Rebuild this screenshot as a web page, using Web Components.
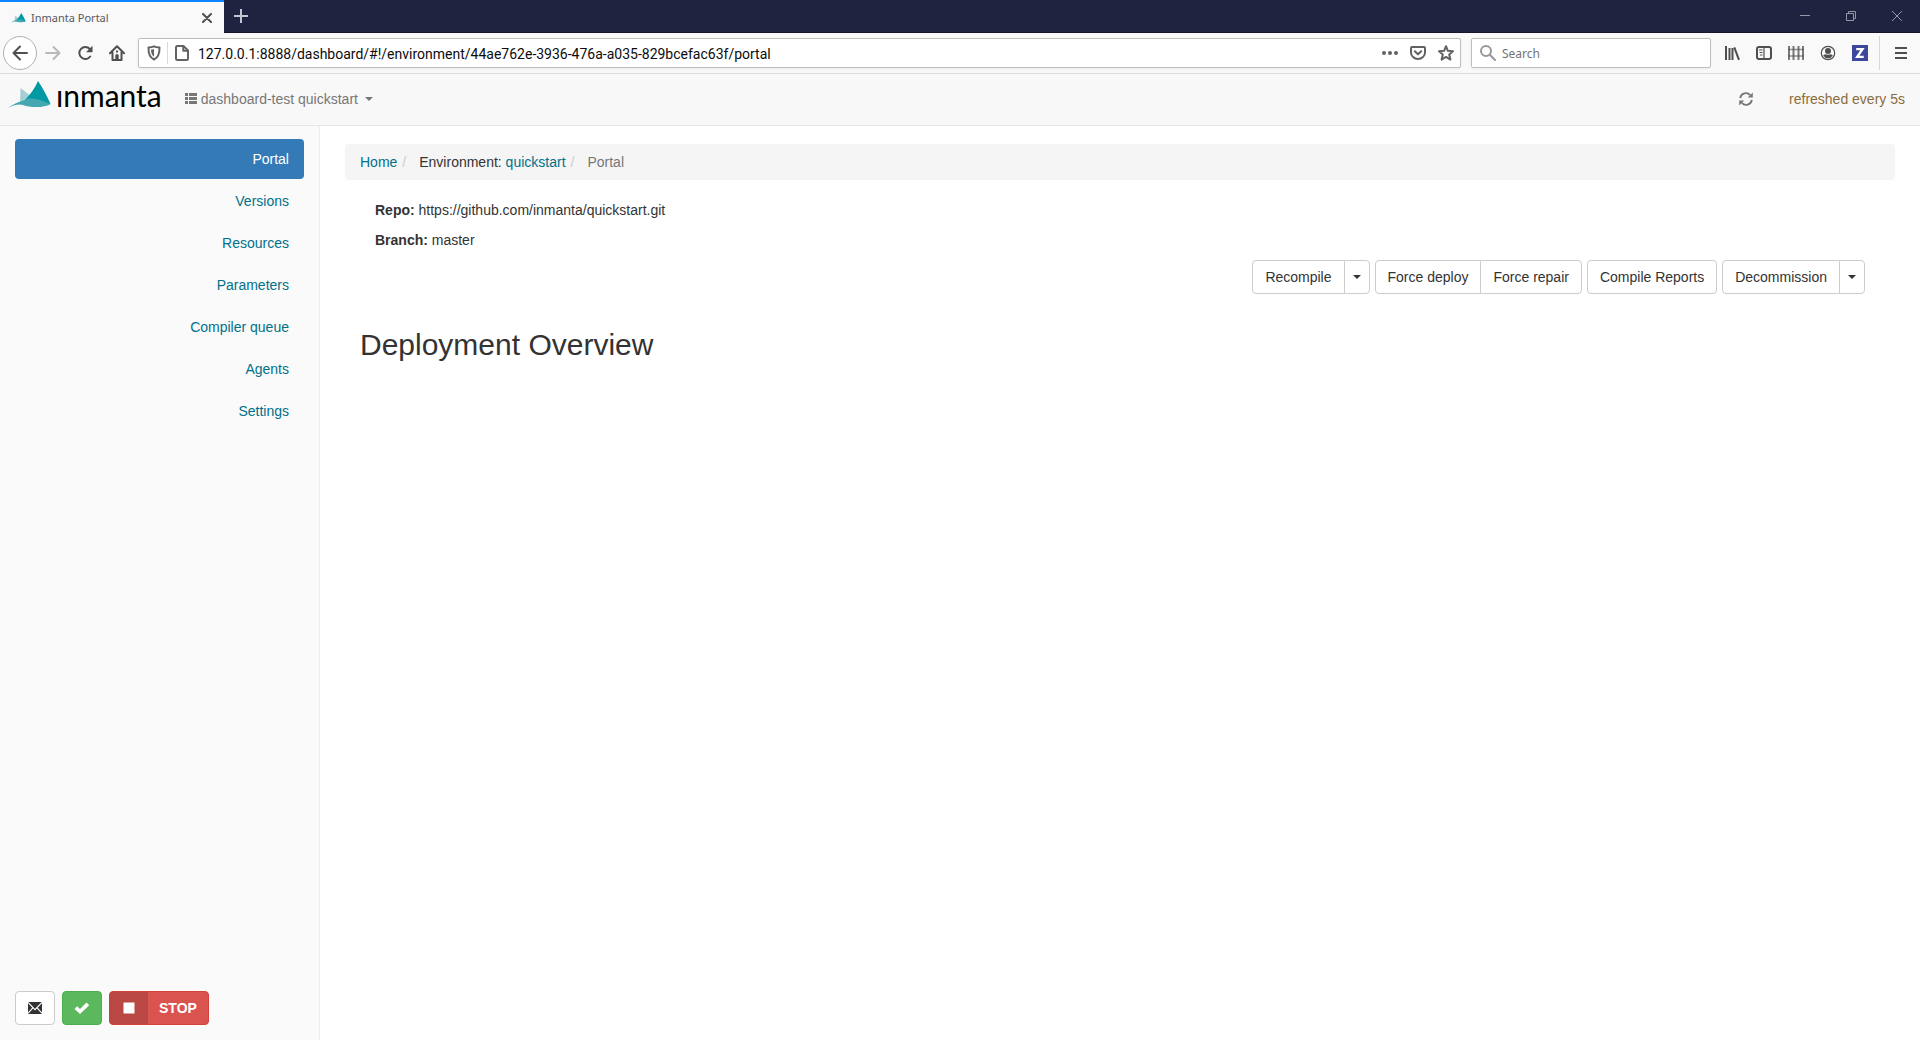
<!DOCTYPE html>
<html lang="en">
<head>
<meta charset="utf-8">
<title>Inmanta Portal</title>
<style>
html,body{margin:0;height:100%}
body{font:14px/20px "Liberation Sans",Arial,sans-serif;color:#333;background:#fff}
</style>
</head>
<body>
<inmanta-window></inmanta-window>
<script>
const define = (name, css, html) => customElements.define(name, class extends HTMLElement {
  constructor() {
    super();
    const t = document.createElement('template');
    t.innerHTML = `<style>*{box-sizing:border-box}button,input{font:inherit;color:inherit;margin:0}a{text-decoration:none}${css}</style>` +
      (typeof html === 'function' ? html(this) : html);
    this.attachShadow({ mode: 'open' }).append(t.content.cloneNode(true));
  }
});

/* Icons: [width, height, markup] */
const S = 'fill="none" stroke="currentColor" stroke-width="2" stroke-linecap="round" stroke-linejoin="round"';
const icons = {
  back: [16, 16, `<path ${S} d="M15 8H1.500M8 1.500L1.500 8L8 14.500"/>`],
  forward: [16, 16, `<path ${S} d="M1 8H14.500M8.500 2L14.500 8L8.500 14"/>`],
  reload: [16, 16, `<path ${S} d="M13.200 11.500A6 6 0 1 1 12.800 4"/><path fill="currentColor" d="M15.500.800V7.300H9z"/>`],
  home: [16, 16, `<path ${S} d="M1 8.200L8 1.200L15 8.200M3.500 7.500V15H12.500V7.500"/><path fill="currentColor" d="M6.300 15V10.500Q6.300 9 8 9T9.700 10.500V15zM7 5.500h2v2h-2z"/>`],
  shield: [14, 16, `<path ${S} stroke-width="1.600" d="M7 1.300C5 2.200 3 2.300 1.500 2.400C1.300 9 2.500 12.500 7 14.500C11.500 12.500 12.700 9 12.500 2.400C11 2.300 9 2.200 7 1.300z"/><path fill="currentColor" d="M7 4Q5.500 4.500 4 4.600Q4 9.800 7 11.800z"/>`],
  page: [16, 16, `<path ${S} d="M3.500 1H9.500L14 5.500V13.500Q14 15 12.500 15H3.500Q2 15 2 13.500V2.500Q2 1 3.500 1z"/><path ${S} stroke-width="1.500" d="M9.300 1.500V5.800H13.500"/>`],
  dots: [16, 16, `<g fill="currentColor"><circle cx="2" cy="8" r="2"/><circle cx="8" cy="8" r="2"/><circle cx="14" cy="8" r="2"/></g>`],
  pocket: [16, 16, `<path ${S} d="M2 2H14Q15 2 15 3V7.500A7 6.500 0 0 1 1 7.500V3Q1 2 2 2z"/><path ${S} d="M4.800 6.300L8 9.300L11.200 6.300"/>`],
  star: [16, 16, `<path ${S} stroke-width="1.800" d="M8 1.200L9.900 5.800L15 6.200L11.200 9.500L12.400 14.600L8 11.900L3.600 14.600L4.800 9.500L1 6.200L6.100 5.800z"/>`],
  search: [16, 16, `<circle ${S} cx="6" cy="6" r="5"/><path ${S} d="M9.800 9.800L15 15"/>`],
  library: [16, 16, `<g fill="currentColor"><path d="M1 1h2v14H1zM4.500 3h2v12h-2zM7.500 3h2v12h-2z"/></g><path stroke="currentColor" stroke-width="2" d="M10.300 2.300L15 14.800"/>`],
  sidebar: [16, 16, `<rect ${S} x="1" y="2" width="14" height="12" rx="2"/><path stroke="currentColor" stroke-width="1.200" d="M8 2V14M3 5H6.500M3.500 7.500H6.500M4 10H6.500"/>`],
  fence: [16, 16, `<path opacity=".75" fill="none" stroke="currentColor" stroke-width="2" d="M1 1V15M5.500 1V15M10.500 1V15M15 1V15"/><path opacity=".6" stroke="currentColor" stroke-width="1.500" d="M0 4.500H16M0 11H16"/>`],
  account: [16, 16, `<circle cx="8" cy="8" r="6.700" fill="none" stroke="currentColor" stroke-width="1.200"/><circle cx="8" cy="6" r="3" fill="currentColor"/><path fill="currentColor" d="M3.200 10.500Q4.500 9.300 6 9.200Q8 10.300 10 9.200Q11.500 9.300 12.800 10.500Q11 13.300 8 13.300T3.200 10.500z"/>`],
  zed: [16, 16, `<path fill="#3b469c" d="M0 0H16V16H0z"/><path fill="none" stroke="#fff" stroke-width="2.300" d="M4.200 4.200H10.500L5.200 11.800H11.700"/>`],
  menu: [12, 12, `<path fill="currentColor" d="M0 0h12v2H0zM0 5h12v2H0zM0 10h12v2H0z"/>`],
  close: [10, 10, `<path ${S} stroke-width="1.700" d="M1 1L9 9M9 1L1 9"/>`],
  plus: [14, 14, `<path fill="currentColor" d="M6 0h2v6h6v2H8v6H6V8H0V6h6z"/>`],
  minimise: [10, 11, `<path fill="currentColor" d="M0 4h10v1H0z"/>`],
  restore: [10, 10, `<path fill="none" stroke="currentColor" d="M.5 2.500h7v7h-7zM2.500 2.500v-2h7v7h-2"/>`],
  shut: [10, 10, `<path fill="none" stroke="currentColor" d="M0 0L10 10M10 0L0 10"/>`],
  list: [12, 11, `<path fill="currentColor" d="M0 0h3v3H0zM4 0h8v3H4zM0 4h3v3H0zM4 4h8v3H4zM0 8h3v3H0zM4 8h8v3H4z"/>`],
  refresh: [14, 14, `<path fill="none" stroke="currentColor" stroke-width="1.800" d="M1.200 6.200A5.700 5.700 0 0 1 11.200 3.200M12.800 7.800A5.700 5.700 0 0 1 2.800 10.800"/><path fill="currentColor" d="M13.800.500V5.500H8.800zM.200 13.500V8.500H5.200z"/>`],
  caret: [8, 4, `<path fill="currentColor" d="M0 0H8L4 4z"/>`],
  envelope: [14, 12, `<path fill="currentColor" d="M0 0H14V12H0z"/><path fill="none" stroke="#fff" stroke-width="1.100" d="M0 .5L7 7.600L14 .5M0 11.300L4.800 5.800M14 11.300L9.200 5.800"/>`],
  check: [16, 12, `<path fill="currentColor" d="M.500 7L3.200 4.300L6 7L12.500.500L15.200 3.200L6 12z"/>`],
  stop: [12, 12, `<path fill="currentColor" d="M.500.500h11v11H.500z"/>`],
  sail: [44, 28, `<path fill="#a5cfd3" d="M13.500 7L30 20L13 24z"/><path fill="#0099a4" d="M31 0C36 7 40 15 43.500 23L33 25L17 20C23 14 28 7 31 0z"/><path fill="#45a8b1" d="M1 27C8 22 14 20 18 19C23 15.500 34 18.500 43.500 23C37 27.500 22 26.500 15 23.700C10 23.300 6 24.500 1 27z"/>`]
};
customElements.define('ui-icon', class extends HTMLElement {
  constructor() {
    super();
    this.attachShadow({ mode: 'open' });
  }
  connectedCallback() {
    const [w, h, body] = icons[this.getAttribute('name')];
    const width = +this.getAttribute('width') || w;
    this.shadowRoot.innerHTML = `<style>:host{display:inline-flex;flex:none}svg{display:block}</style>
      <svg aria-hidden="true" width="${width}" height="${Math.round(h * width / w)}" viewBox="0 0 ${w} ${h}">${body}</svg>`;
  }
});

/* Browser frame */
define('tool-button', `
  :host{display:flex;flex:none;width:32px;height:32px;color:#4f4f52}
  button{flex:1;display:flex;align-items:center;justify-content:center;border:0;padding:0;background:none}
  button:disabled{color:#b9b9ba}
  :host([round]){width:34px;height:34px}
  :host([round]) button{border:1px solid #b1b1b3;border-radius:50%;background:#fff}
`, el => `<button aria-label="${el.getAttribute('label')}"${el.hasAttribute('off') ? ' disabled' : ''}><slot></slot></button>`);

define('tab-strip', `
  :host{display:flex;height:33px;background:#202340;color:#b8b9c4;font:11px/16px "Noto Sans",sans-serif;box-shadow:inset 0 -1px #14162b}
  .tab{display:flex;align-items:center;width:224px;height:33px;padding:0 11px 0 10px;border-top:2px solid #0a84ff;background:#f9f9fa;color:#58585c}
  .tab span{flex:1;padding-left:5px}
  .tab tool-button{width:12px}
  .new{width:34px;color:#c4c5cf}
  .win{display:flex;margin-left:auto}
  .win tool-button{width:46px;color:#9697a5}
`, `<div class="tab"><ui-icon name="sail" width="16"></ui-icon><span>Inmanta Portal</span><tool-button label="Close tab"><ui-icon name="close"></ui-icon></tool-button></div>
  <tool-button class="new" label="New tab"><ui-icon name="plus"></ui-icon></tool-button>
  <div class="win"><tool-button label="Minimise"><ui-icon name="minimise"></ui-icon></tool-button><tool-button label="Restore"><ui-icon name="restore"></ui-icon></tool-button><tool-button label="Close window"><ui-icon name="shut"></ui-icon></tool-button></div>`);

define('address-bar', `
  :host{display:flex;align-items:center;height:41px;padding:0 3px;background:#f9f9fa;border-bottom:1px solid #dcdcdd}
  .box{display:flex;align-items:center;height:30px;border:1px solid #bebebf;border-radius:2px;background:#fff;box-shadow:0 1px 3px rgba(0,0,0,.06);color:#626265}
  .url{flex:1;margin:0 10px 0 5px;padding:0 6px 0 8px;font:14px/18px Roboto,sans-serif}
  .rule{width:1px;height:22px;margin:0 6px;background:#d9d9da}
  .url input{flex:1;min-width:0;margin-left:8px;color:#0c0c0d}
  .actions{display:flex;gap:12px}
  .search{width:240px;padding:0 8px;gap:6px;color:#98989a;font:12px/18px "Noto Sans",sans-serif}
  .search input{flex:1;min-width:0;color:#737373}
  input{border:0;padding:2px 0 0;background:none;outline:0}
  input::placeholder{color:#737373;opacity:1}
  .tools{display:flex;margin-left:5px}
  .end{width:1px;height:34px;margin:0 5px 0 3px;background:#d7d7db}
`, `<tool-button round label="Back"><ui-icon name="back"></ui-icon></tool-button>
  <tool-button off label="Forward"><ui-icon name="forward"></ui-icon></tool-button>
  <tool-button label="Reload"><ui-icon name="reload"></ui-icon></tool-button>
  <tool-button label="Home"><ui-icon name="home"></ui-icon></tool-button>
  <div class="box url"><ui-icon name="shield"></ui-icon><span class="rule"></span><ui-icon name="page"></ui-icon>
    <input type="text" aria-label="Address" value="127.0.0.1:8888/dashboard/#!/environment/44ae762e-3936-476a-a035-829bcefac63f/portal">
    <span class="actions"><ui-icon name="dots"></ui-icon><ui-icon name="pocket"></ui-icon><ui-icon name="star"></ui-icon></span></div>
  <div class="box search"><ui-icon name="search"></ui-icon><input type="text" aria-label="Search" placeholder="Search"></div>
  <div class="tools">${['library', 'sidebar', 'fence', 'account', 'zed'].map(n => `<tool-button label="${n}"><ui-icon name="${n}"></ui-icon></tool-button>`).join('')}</div>
  <span class="end"></span><tool-button label="Menu"><ui-icon name="menu"></ui-icon></tool-button>`);

/* Dashboard */
define('app-navbar', `
  :host{display:flex;align-items:center;height:52px;padding:0 15px 2px 7px;background:#f8f8f8;border-bottom:1px solid #e7e7e7;color:#777}
  .brand{display:flex;align-items:center;gap:5px;padding-bottom:8px;color:#000;font:30px/32px Lato,sans-serif}
  .env{display:flex;align-items:center;margin-left:23px;padding:0;border:0;background:none;gap:4px}
  .env ui-icon:last-child{margin-left:3px}
  .refresh{display:flex;margin-left:auto;padding:0;border:0;background:none}
  .note{margin-left:36px;color:#8a6d3b}
`, `<a class="brand" href="#"><ui-icon name="sail"></ui-icon><span>ınmanta</span></a>
  <button class="env"><ui-icon name="list"></ui-icon>dashboard-test quickstart<ui-icon name="caret"></ui-icon></button>
  <button class="refresh" aria-label="Refresh"><ui-icon name="refresh"></ui-icon></button><span class="note">refreshed every 5s</span>`);

define('nav-item', `
  :host{display:block}
  a{display:block;padding:10px 15px;border-radius:4px;text-align:right;color:#00718a}
  :host([active]) a{background:#337ab7;color:#fff}
`, `<a href="#"><slot></slot></a>`);

define('ui-button', `
  :host{display:flex}
  button{display:flex;align-items:center;justify-content:center;height:34px;padding:0 12px;border:1px solid #ccc;border-radius:4px;background:#fff;color:#333;white-space:nowrap}
  :host([small]) button{padding:0 8px}
  :host([square]) button{width:40px;padding:0}
  :host([first]) button{border-radius:4px 0 0 4px}
  :host([last]) button{border-radius:0 4px 4px 0}
  :host([last]){margin-left:-1px}
  :host([kind=success]) button{background:#5cb85c;border-color:#4cae4c;color:#fff}
  :host([kind=danger]) button{padding:0;overflow:hidden;background:#d9534f;border-color:#d43f3a;color:#fff;font-weight:bold}
`, el => `<button${el.hasAttribute('label') ? ` aria-label="${el.getAttribute('label')}"` : ''}><slot></slot></button>`);

define('side-bar', `
  :host{display:flex;flex-direction:column;justify-content:space-between;width:calc(100% / 6);padding:13px 15px 15px;background:#fafafa;border-right:1px solid #eee}
  nav{display:flex;flex-direction:column;gap:2px}
  .row{display:flex;gap:7px}
  .sq,.label{display:flex;align-items:center;justify-content:center;height:32px}
  .sq{width:38px;background:#b94743}
  .label{padding:0 11px}
`, `<nav><nav-item active>Portal</nav-item><nav-item>Versions</nav-item><nav-item>Resources</nav-item><nav-item>Parameters</nav-item><nav-item>Compiler queue</nav-item><nav-item>Agents</nav-item><nav-item>Settings</nav-item></nav>
  <div class="row"><ui-button square label="Messages"><ui-icon name="envelope"></ui-icon></ui-button><ui-button square kind="success" label="Status"><ui-icon name="check"></ui-icon></ui-button>
  <ui-button kind="danger"><span class="sq"><ui-icon name="stop"></ui-icon></span><span class="label">STOP</span></ui-button></div>`);

define('bread-crumb', `
  :host{display:block;padding:8px 15px;border-radius:4px;background:#f5f5f5}
  ol{display:flex;flex-wrap:wrap;gap:4px;margin:0;padding:0;list-style:none}
  li:not(:last-child)::after{content:"/";padding-left:5px;color:#ccc}
  li+li{padding-left:9px}
  li:last-child{color:#777}
  a{color:#00718a}
`, `<ol><li><a href="#">Home</a></li><li>Environment: <a href="#">quickstart</a></li><li>Portal</li></ol>`);

define('portal-page', `
  :host{flex:1;display:block;padding:18px 25px}
  .info{padding:20px 30px 0}
  p{margin:0 0 10px}
  .actions{display:flex;justify-content:flex-end;flex-wrap:wrap;gap:5px;padding-right:30px}
  .group{display:flex}
  h2{margin:0;padding:34px 15px 0;font-size:30px;line-height:34px;font-weight:normal}
`, `<bread-crumb></bread-crumb>
  <div class="info"><p><b>Repo:</b> https://github.com/inmanta/quickstart.git</p><p><b>Branch:</b> master</p></div>
  <div class="actions">
    <div class="group"><ui-button first>Recompile</ui-button><ui-button last small label="Recompile options"><ui-icon name="caret"></ui-icon></ui-button></div>
    <div class="group"><ui-button first>Force deploy</ui-button><ui-button last>Force repair</ui-button></div>
    <ui-button>Compile Reports</ui-button>
    <div class="group"><ui-button first>Decommission</ui-button><ui-button last small label="Decommission options"><ui-icon name="caret"></ui-icon></ui-button></div>
  </div>
  <h2>Deployment Overview</h2>`);

define('inmanta-window', `
  :host{display:flex;flex-direction:column;min-height:100vh}
  main{flex:1;display:flex}
`, `<tab-strip></tab-strip><address-bar></address-bar><app-navbar></app-navbar><main><side-bar></side-bar><portal-page></portal-page></main>`);
</script>
</body>
</html>
